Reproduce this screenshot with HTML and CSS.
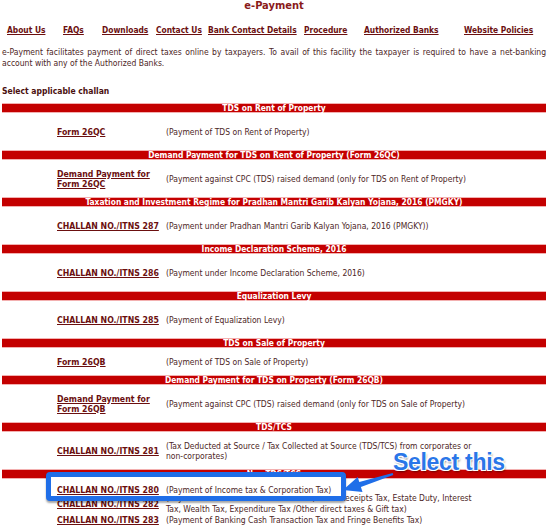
FILE: index.html
```html
<!DOCTYPE html>
<html>
    <head>
        <meta charset="UTF-8">
        <meta name="viewport" content="width=device-width, initial-scale=1.0">
        <title>e-Payment</title>
        <link rel="stylesheet" href="styles.css">
    </head>
    <body>
        <div id="page">
            <h1 class="title">e-Payment</h1>
            <div class="nav">
                <a href="#">About Us</a>
                <a href="#">FAQs</a>
                <a href="#">Downloads</a>
                <a href="#">Contact Us</a>
                <a href="#">Bank Contact Details</a>
                <a href="#">Procedure</a>
                <a href="#">Authorized Banks</a>
                <a href="#">Website Policies</a>
            </div>
            <p class="intro">e-Payment facilitates payment of direct taxes online by taxpayers. To avail of this facility the taxpayer is required to have a net-banking account with any of the Authorized Banks.</p>
            <p class="select">Select applicable challan</p>

            <div class="bar">TDS on Rent of Property</div>
            <div class="row">
                <a href="#">Form 26QC</a>
                <span class="desc">(Payment of TDS on Rent of Property)</span>
            </div>
            <div class="bar">Demand Payment for TDS on Rent of Property (Form 26QC)</div>
            <div class="row">
                <a href="#">Demand Payment for<br>Form 26QC</a>
                <span class="desc">(Payment against CPC (TDS) raised demand (only for TDS on Rent of Property)</span>
            </div>
            <div class="bar">Taxation and Investment Regime for Pradhan Mantri Garib Kalyan Yojana, 2016 (PMGKY)</div>
            <div class="row">
                <a href="#">CHALLAN NO./ITNS 287</a>
                <span class="desc">(Payment under Pradhan Mantri Garib Kalyan Yojana, 2016 (PMGKY))</span>
            </div>
            <div class="bar">Income Declaration Scheme, 2016</div>
            <div class="row">
                <a href="#">CHALLAN NO./ITNS 286</a>
                <span class="desc">(Payment under Income Declaration Scheme, 2016)</span>
            </div>
            <div class="bar">Equalization Levy</div>
            <div class="row">
                <a href="#">CHALLAN NO./ITNS 285</a>
                <span class="desc">(Payment of Equalization Levy)</span>
            </div>
            <div class="bar">TDS on Sale of Property</div>
            <div class="row short">
                <a href="#">Form 26QB</a>
                <span class="desc">(Payment of TDS on Sale of Property)</span>
            </div>
            <div class="bar">Demand Payment for TDS on Property (Form 26QB)</div>
            <div class="row">
                <a href="#">Demand Payment for<br>Form 26QB</a>
                <span class="desc">(Payment against CPC (TDS) raised demand (only for TDS on Sale of Property)</span>
            </div>
            <div class="bar">TDS/TCS</div>
            <div class="row">
                <a href="#">CHALLAN NO./ITNS 281</a>
                <span class="desc">(Tax Deducted at Source / Tax Collected at Source (TDS/TCS) from corporates or<br>non-corporates)</span>
            </div>
            <div class="bar">Non-TDS/TCS</div>
            <div class="row compact picked">
                <a href="#">CHALLAN NO./ITNS 280</a>
                <span class="desc">(Payment of Income tax &amp; Corporation Tax)</span>
            </div>
            <div class="row compact">
                <a href="#">CHALLAN NO./ITNS 282</a>
                <span class="desc">(Payment of Securities transaction tax, Hotel Receipts Tax, Estate Duty, Interest<br>Tax, Wealth Tax, Expenditure Tax /Other direct taxes &amp; Gift tax)</span>
            </div>
            <div class="row compact">
                <a href="#">CHALLAN NO./ITNS 283</a>
                <span class="desc">(Payment of Banking Cash Transaction Tax and Fringe Benefits Tax)</span>
            </div>

            <div class="callout"></div>
            <svg class="arrow" width="65" height="36" viewBox="0 0 65 36">
                <polygon points="8,28 22.7,14.9 24.3,20.1 57.7,11 58.3,13 25.9,24.9 27.5,30.1" fill="#1f6ee8"/>
            </svg>
            <div class="note">Select this</div>
        </div>
    </body>
</html>
```

FILE: styles.css
```css
body {
    margin:0;
    background:#fff;
    font-family:"DejaVu Sans Condensed", "DejaVu Sans", sans-serif;
    font-size:8.5px;
    color:#4d2626;
}
#page {
    position:relative;
    padding:0 4px 0 2px;
}
a {
    color:#6b0f0f;
    font-weight:bold;
}
.title {
    margin:0;
    font-size:11px;
    line-height:12px;
    text-align:center;
    color:#8a1a1a;
}
.nav {
    display:grid;
    grid-template-columns:56px 39px 54px 52px 96px 60px 100px 1fr;
    margin-top:13px;
    padding-left:5px;
    font-size:8.35px;
    line-height:10px;
}
.intro {
    margin:12px 0 0;
    line-height:11px;
    text-align:justify;
}
.select {
    margin:17px 0 0;
    line-height:10px;
    font-weight:bold;
    color:#4a1010;
}
.bar {
    height:8px;
    line-height:8px;
    border-top:1px solid #f3b0b0;
    border-bottom:1px solid #f3b0b0;
    background:#c40000;
    color:#fff;
    font-size:8.4px;
    font-weight:bold;
    text-align:center;
    white-space:nowrap;
}
.select + .bar {margin-top:7px;}
.row {
    display:grid;
    grid-template-columns:105px 370px;
    column-gap:4px;
    align-items:center;
    height:37px;
    padding-left:55px;
    line-height:10px;
}
.row a {font-size:8.7px;}
.row.short {height:27px;}
.row.compact {
    height:auto;
    line-height:11px;
}
.row.picked {
    position:relative;
    z-index:2;
    height:14px;
    top:4px;
}
.callout {
    position:absolute;
    left:46px;
    top:472px;
    width:290px;
    height:19px;
    border:5px solid #1f6ee8;
    border-radius:4px;
    background:#fff;
    box-shadow:0 2px 2px rgba(0,0,0,0.35);
    z-index:1;
}
.arrow {
    position:absolute;
    left:335px;
    top:462px;
    z-index:3;
}
.note {
    position:absolute;
    left:393px;
    top:452px;
    z-index:3;
    font-family:"Liberation Sans", Arial, sans-serif;
    font-size:23px;
    font-weight:bold;
    line-height:21px;
    letter-spacing:-0.3px;
    color:#2a76e8;
    text-shadow:-1px -1px 0 #fff, 1px -1px 0 #fff, -1px 1px 0 #fff, 1px 1px 0 #fff, 1px 2px 2px rgba(0,0,0,0.5);
}
```
